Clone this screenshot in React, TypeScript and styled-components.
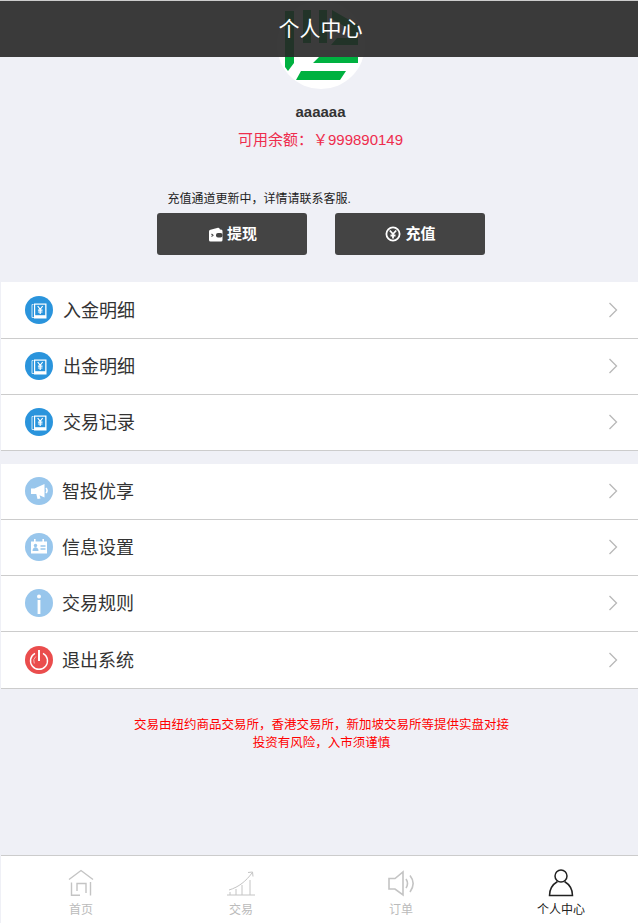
import React from "react";
import styled, { createGlobalStyle } from "styled-components";

const Global = createGlobalStyle`
  html, body { margin: 0; padding: 0; background: #eff0f6; }
  body { font-family: "Liberation Sans", "Noto Sans CJK SC", sans-serif; }
`;
const Page = styled.div`
  position: relative;
  width: 638px;
  height: 923px;
  overflow: hidden;
  display: flex;
  flex-direction: column;
  background: #eff0f6;
  border-top: 1px solid #ccc;
  box-sizing: border-box;
`;
const Header = styled.div`
  position: absolute;
  top: 0;
  left: 0;
  right: 0;
  height: 56px;
  background: rgba(38, 38, 38, 0.9);
  color: #fff;
  font-size: 21px;
  line-height: 56px;
  text-align: center;
  padding-left: 3px;
`;
const Profile = styled.div`
  display: flex;
  flex-direction: column;
  align-items: center;
  height: 281px;
  box-sizing: border-box;
  padding-left: 3px;
`;
const Avatar = styled.svg`
  width: 88px;
  height: 88px;
  display: block;
`;
const Name = styled.div`
  margin-top: 13px;
  font-size: 15px;
  line-height: 20px;
  font-weight: bold;
  color: #333;
`;
const Balance = styled.div`
  margin-top: 8px;
  font-size: 15px;
  line-height: 20px;
  color: #ee2d4d;
`;
const Notice = styled.div`
  margin-top: 41px;
  width: 328px;
  padding-left: 11px;
  box-sizing: border-box;
  font-size: 12px;
  line-height: 16px;
  color: #222;
`;
const Buttons = styled.div`
  margin-top: 6px;
  display: flex;
  gap: 28px;
`;
const ActionButton = styled.div`
  width: 150px;
  height: 42px;
  box-sizing: border-box;
  padding-left: 2px;
  border-radius: 3px;
  background: #444;
  color: #fff;
  font-size: 15px;
  font-weight: bold;
  display: flex;
  align-items: center;
  justify-content: center;
  gap: 4px;
`;
const ButtonLabel = styled.span`
  margin-top: -4px;
`;
const Group = styled.div<{ $gap?: number; $top?: number }>`
  margin-top: ${(p) => p.$gap ?? 0}px;
  margin-left: 1px;
  padding-top: ${(p) => p.$top ?? 0}px;
  background: #fff;
  display: flex;
  flex-direction: column;
`;
const Row = styled.div<{ $h?: number; $pb?: number }>`
  height: ${(p) => p.$h ?? 56}px;
  box-sizing: border-box;
  border-bottom: 1px solid #ccc;
  display: flex;
  align-items: center;
  padding: 0 20px ${(p) => p.$pb ?? 1}px 24px;
`;
const RowIcon = styled.svg`
  width: 28px;
  height: 28px;
  flex: none;
`;
const RowLabel = styled.div<{ $offset: number }>`
  margin-left: ${(p) => p.$offset}px;
  padding-bottom: 2px;
  font-size: 18px;
  color: #333;
  flex: 1;
`;
const Chevron = styled.svg`
  width: 10px;
  height: 16px;
  flex: none;
`;
const Disclaimer = styled.div`
  margin-top: 27px;
  padding-left: 5px;
  font-size: 12.5px;
  line-height: 18px;
  color: #f00;
  text-align: center;
`;
const TabBar = styled.div`
  position: absolute;
  left: 1px;
  right: 0;
  bottom: 0;
  height: 68px;
  box-sizing: border-box;
  background: #fff;
  border-top: 1px solid #ccc;
  display: grid;
  grid-template-columns: repeat(4, 160px);
`;
const Tab = styled.div<{ $active?: boolean }>`
  display: flex;
  flex-direction: column;
  align-items: center;
  padding-top: 13px;
  font-size: 12px;
  line-height: 16px;
  color: ${(p) => (p.$active ? "#222" : "#bbb")};
`;
const TabIcon = styled.svg`
  width: 30px;
  height: 30px;
  display: block;
  margin-bottom: 3px;
`;

const LedgerIcon = () => (
  <RowIcon viewBox="0 0 28 28">
    <circle cx="14" cy="14" r="14" fill="#2a94dc" />
    <path d="M8.500 8.500H7v13h2.500" fill="none" stroke="#cfe6f7" strokeWidth="1" />
    <rect x="9" y="7.500" width="12.500" height="15" fill="#fff" />
    <rect x="10.200" y="8.700" width="10" height="10.500" fill="#2a94dc" />
    <path d="M12.700 10 15.200 13.300 17.700 10M15.200 13.300V18M12.900 14.200h4.600M12.900 16h4.600" stroke="#fff" strokeWidth="1.200" fill="none" />
  </RowIcon>
);
const SpeakerIcon = () => (
  <RowIcon viewBox="0 0 28 28">
    <circle cx="14" cy="14" r="14" fill="#98c6ec" />
    <path d="M6 11.500h3.500L19.500 7v13.500l-5-2.300 1 3.300-3 .6-1.200-5H9.500H6z" fill="#fff" />
    <path d="M21 11a3.500 3.500 0 0 1 0 5" fill="none" stroke="#fff" strokeWidth="1.600" />
  </RowIcon>
);
const CardIcon = () => (
  <RowIcon viewBox="0 0 28 28">
    <circle cx="14" cy="14" r="14" fill="#98c6ec" />
    <rect x="6" y="8.500" width="16" height="12" fill="#fff" />
    <rect x="9" y="6" width="1.600" height="4.500" fill="#fff" />
    <rect x="17.400" y="6" width="1.600" height="4.500" fill="#fff" />
    <circle cx="10.500" cy="12.500" r="1.700" fill="#98c6ec" />
    <path d="M7.500 18c0-5 6-5 6 0z" fill="#98c6ec" />
    <path d="M15.500 13h5M15.500 16h5" stroke="#98c6ec" strokeWidth="1.400" />
  </RowIcon>
);
const InfoIcon = () => (
  <RowIcon viewBox="0 0 28 28">
    <circle cx="14" cy="14" r="14" fill="#98c6ec" />
    <circle cx="14" cy="7.500" r="2" fill="#fff" />
    <rect x="12.600" y="11" width="2.800" height="14" fill="#fff" />
  </RowIcon>
);
const PowerIcon = () => (
  <RowIcon viewBox="0 0 28 28">
    <circle cx="14" cy="14" r="14" fill="#ea4d4d" />
    <path d="M10 7.300a8.500 8.500 0 1 0 8 0" fill="none" stroke="#fff" strokeWidth="1.400" />
    <path d="M10.800 10.500a6 6 0 0 0-1.500 7" fill="none" stroke="#f6b5b5" strokeWidth="1" />
    <rect x="13" y="4" width="2" height="11" fill="#fff" />
  </RowIcon>
);
const ChevronIcon = () => (
  <Chevron viewBox="0 0 10 16">
    <path d="M1.500 1 8.500 8l-7 7" fill="none" stroke="#b8b8b8" strokeWidth="1.300" />
  </Chevron>
);

const rows1 = ["入金明细", "出金明细", "交易记录"];

export default function App() {
  return (
    <Page>
      <Global />
      <Profile>
        <Avatar viewBox="0 0 88 88">
          <circle cx="44" cy="44" r="44" fill="#fff" />
          <path d="M8 10h9v52l-6 8-3-4z" fill="#00b140" />
          <path d="M26 9h8v33h-8zM42 9h8v33h-8z" fill="#00b140" />
          <path d="M55 9l26 15v20H54l6-7h12V28L55 18z" fill="#00b140" />
          <path d="M42 56h39v6H36zM24 70l45 0-6 9H19z" fill="#00b140" />
        </Avatar>
        <Name>aaaaaa</Name>
        <Balance>可用余额：￥999890149</Balance>
        <Notice>充值通道更新中，详情请联系客服.</Notice>
        <Buttons>
          <ActionButton>
            <svg width="15" height="15" viewBox="0 0 15 15">
              <path d="M1 4.500Q1 3 2.500 2.800L10 .8Q11.500.5 12 2.500H13a1.500 1.500 0 0 1 1.500 1.500v9a1.500 1.500 0 0 1-1.500 1.500H2.500A1.500 1.500 0 0 1 1 13z" fill="#fff" />
              <rect x="8" y="6" width="6.500" height="4.500" rx="2" fill="#444" />
              <path d="M3.500 7l1.500 1.300L3.500 9.500" stroke="#444" strokeWidth="1.100" fill="none" />
            </svg>
            <ButtonLabel>提现</ButtonLabel>
          </ActionButton>
          <ActionButton>
            <svg width="16" height="16" viewBox="0 0 16 16">
              <circle cx="8" cy="8" r="6.600" fill="none" stroke="#fff" strokeWidth="1.800" />
              <path d="M4.800 4.500 8 8l3.200-3.500M8 8v4.500M5.500 9.500h5" stroke="#fff" strokeWidth="1.800" fill="none" />
            </svg>
            <ButtonLabel>充值</ButtonLabel>
          </ActionButton>
        </Buttons>
      </Profile>
      <Group $top={1}>
        {rows1.map((label) => (
          <Row key={label}>
            <LedgerIcon />
            <RowLabel $offset={10}>{label}</RowLabel>
            <ChevronIcon />
          </Row>
        ))}
      </Group>
      <Group $gap={13}>
        <Row $pb={2}><SpeakerIcon /><RowLabel $offset={9}>智投优享</RowLabel><ChevronIcon /></Row>
        <Row><CardIcon /><RowLabel $offset={9}>信息设置</RowLabel><ChevronIcon /></Row>
        <Row><InfoIcon /><RowLabel $offset={9}>交易规则</RowLabel><ChevronIcon /></Row>
        <Row $h={57} $pb={0}><PowerIcon /><RowLabel $offset={9}>退出系统</RowLabel><ChevronIcon /></Row>
      </Group>
      <Disclaimer>
        交易由纽约商品交易所，香港交易所，新加坡交易所等提供实盘对接
        <br />
        投资有风险，入市须谨慎
      </Disclaimer>
      <TabBar>
        <Tab>
          <TabIcon viewBox="0 0 30 30" fill="none" stroke="#c4c4c4" strokeWidth="1.400">
            <path d="M3 10.500 15 1.500 27 10.500" />
            <path d="M5.500 13.500V26.300H14M11 22V14.500h9V24M24.500 13V26.500" />
          </TabIcon>
          首页
        </Tab>
        <Tab>
          <TabIcon viewBox="0 0 30 30" fill="none" stroke="#c4c4c4" strokeWidth="1">
            <path d="M1 26h28M4 26v-3M10 26v-6M16 26v-10M24 26V11" />
            <path d="M3 21C13 18 20 12 26 4M22 3.500 26.500 3l.5 4.500" />
          </TabIcon>
          交易
        </Tab>
        <Tab>
          <TabIcon viewBox="0 0 30 30" fill="none" stroke="#c4c4c4" strokeWidth="1.600">
            <path d="M3 9.500h6l8-6.500v23L9 20H3z" />
            <path d="M20 10c2 3 2 6 0 9M24 6.500c4 5 4 11 0 16.500" />
          </TabIcon>
          订单
        </Tab>
        <Tab $active>
          <TabIcon viewBox="0 0 30 30" fill="none" stroke="#222" strokeWidth="1.500">
            <circle cx="15" cy="7" r="6" />
            <path d="M11.500 12.500C6.500 15.500 3.500 20.500 3.500 26.500h23C26.500 20.500 23.500 15.500 18.500 12.500" />
          </TabIcon>
          个人中心
        </Tab>
      </TabBar>
      <Header>个人中心</Header>
    </Page>
  );
}
